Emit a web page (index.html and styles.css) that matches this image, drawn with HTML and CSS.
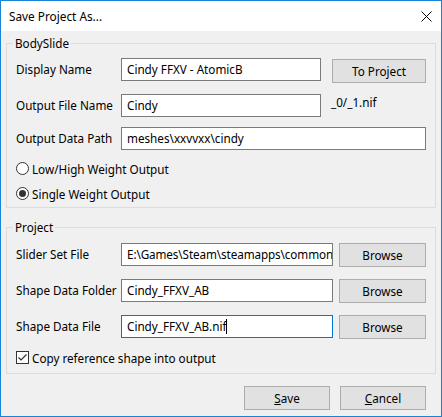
FILE: index.html
```html
<!DOCTYPE html>
<html lang="en">
<head>
    <meta charset="UTF-8">
    <title>Save Project As...</title>
    <link rel="stylesheet" href="styles.css">
</head>
<body>

<div class="window">
    <!-- Title bar -->
    <div class="titlebar">
        <span class="title">Save Project As...</span>
        <svg class="close" width="11" height="11" viewBox="0 0 11 11">
            <path d="M0.5 0.5 L10.5 10.5 M10.5 0.5 L0.5 10.5" stroke="#000" stroke-width="1" fill="none"/>
        </svg>
    </div>

    <div class="content">
        <!-- BodySlide group -->
        <fieldset class="group group-bodyslide">
            <legend>BodySlide</legend>
            <div class="row row-name">
                <span class="label">Display Name</span>
                <div class="textbox box-name">Cindy FFXV - AtomicB</div>
                <button class="button btn-project">To Project</button>
            </div>
            <div class="row row-file">
                <span class="label">Output File Name</span>
                <div class="textbox box-name">Cindy</div>
                <span class="suffix">_0/_1.nif</span>
            </div>
            <div class="row row-path">
                <span class="label">Output Data Path</span>
                <div class="textbox box-path">meshes\xxvvxx\cindy</div>
            </div>
            <div class="option option-first">
                <span class="radio"></span>
                <span>Low/High Weight Output</span>
            </div>
            <div class="option option-second">
                <span class="radio checked"></span>
                <span>Single Weight Output</span>
            </div>
        </fieldset>

        <!-- Project group -->
        <fieldset class="group group-project">
            <legend>Project</legend>
            <div class="row">
                <span class="label">Slider Set File</span>
                <div class="textbox box-file box-long">E:\Games\Steam\steamapps\common</div>
                <button class="button btn-browse">Browse</button>
            </div>
            <div class="row row-gap">
                <span class="label">Shape Data Folder</span>
                <div class="textbox box-file">Cindy_FFXV_AB</div>
                <button class="button btn-browse">Browse</button>
            </div>
            <div class="row row-gap">
                <span class="label">Shape Data File</span>
                <div class="textbox box-file focused">Cindy_FFXV_AB.nif<span class="caret"></span></div>
                <button class="button btn-browse">Browse</button>
            </div>
            <div class="option option-check">
                <span class="checkbox">
                    <svg width="11" height="11" viewBox="0 0 11 11">
                        <path d="M1.5 5.5 L4 8 L9.5 2.5" stroke="#333" stroke-width="1.2" fill="none"/>
                    </svg>
                </span>
                <span>Copy reference shape into output</span>
            </div>
        </fieldset>

        <!-- Dialog buttons -->
        <div class="footer">
            <button class="button btn-dialog"><u>S</u>ave</button>
            <button class="button btn-dialog"><u>C</u>ancel</button>
        </div>
    </div>
</div>

</body>
</html>
```

FILE: styles.css
```css
body {
    margin: 0;
    padding: 0;
    font-family: "Noto Sans", "Open Sans", sans-serif;
    font-size: 11.7px;
    color: #000;
    background-color: #ffffff;
}

.window {
    width: 442px;
    height: 417px;
    box-sizing: border-box;
    border: 1px solid #1883d7;
    display: flex;
    flex-direction: column;
}

.titlebar {
    height: 30px;
    flex-shrink: 0;
    background-color: #fff;
    display: flex;
    align-items: center;
    justify-content: space-between;
    padding: 0 9px 0 8px;
}

.title {
    font-size: 11.8px;
}

.content {
    flex: 1;
    background-color: #f0f0f0;
    padding: 4px 5px 0 5px;
    display: flex;
    flex-direction: column;
}

.group {
    margin: 0;
    border: 1px solid #dcdcdc;
    padding: 7px 9px 5px 9px;
    min-width: 0;
}

.group legend {
    padding: 0 2px;
    margin-left: -3px;
    line-height: 16px;
}

.group-project {
    margin-top: 11px;
    padding-top: 8px;
    padding-bottom: 7px;
}

.row {
    display: flex;
    align-items: flex-start;
}

.row-name {
    height: 25px;
}

.row-file {
    margin-top: 11px;
}

.row-path {
    margin-top: 10px;
}

.row-gap {
    margin-top: 12px;
}

.label {
    width: 105px;
    flex-shrink: 0;
    line-height: 23px;
    white-space: nowrap;
}

.textbox {
    height: 23px;
    box-sizing: border-box;
    border: 1px solid #7a7a7a;
    background-color: #fff;
    padding: 0 5px;
    line-height: 21px;
    white-space: nowrap;
    overflow: hidden;
}

.textbox.focused {
    border-color: #0078d7;
}

.box-long {
    padding-right: 0;
    letter-spacing: -0.1px;
}

.caret {
    display: inline-block;
    width: 1px;
    height: 15px;
    background-color: #000;
    vertical-align: -3px;
}

.box-name {
    width: 200px;
}

.box-path {
    width: 305px;
}

.box-file {
    width: 212px;
}

.suffix {
    margin-left: 10px;
    line-height: 16px;
}

.button {
    height: 24px;
    box-sizing: border-box;
    border: 1px solid #adadad;
    background-color: #e1e1e1;
    color: #000;
    font: inherit;
    padding: 0;
    cursor: pointer;
}

.btn-project {
    width: 94px;
    margin-left: 11px;
    margin-top: 1px;
}

.btn-browse {
    width: 87px;
    margin-left: 6px;
}

.option {
    display: flex;
    align-items: center;
    height: 17px;
    gap: 3px;
}

.option-first {
    margin-top: 10px;
}

.option-second {
    margin-top: 8px;
}

.option-check {
    margin-top: 10px;
}

.radio {
    width: 13px;
    height: 13px;
    box-sizing: border-box;
    border: 1px solid #333;
    border-radius: 50%;
    background-color: #fff;
    display: flex;
    align-items: center;
    justify-content: center;
}

.radio.checked::after {
    content: "";
    width: 7px;
    height: 7px;
    border-radius: 50%;
    background-color: #333;
}

.checkbox {
    width: 13px;
    height: 13px;
    box-sizing: border-box;
    border: 1px solid #333;
    background-color: #fff;
    display: flex;
    align-items: center;
    justify-content: center;
}

.footer {
    display: flex;
    justify-content: flex-end;
    gap: 10px;
    margin-top: 12px;
    padding-right: 10px;
}

.btn-dialog {
    width: 86px;
}
```
